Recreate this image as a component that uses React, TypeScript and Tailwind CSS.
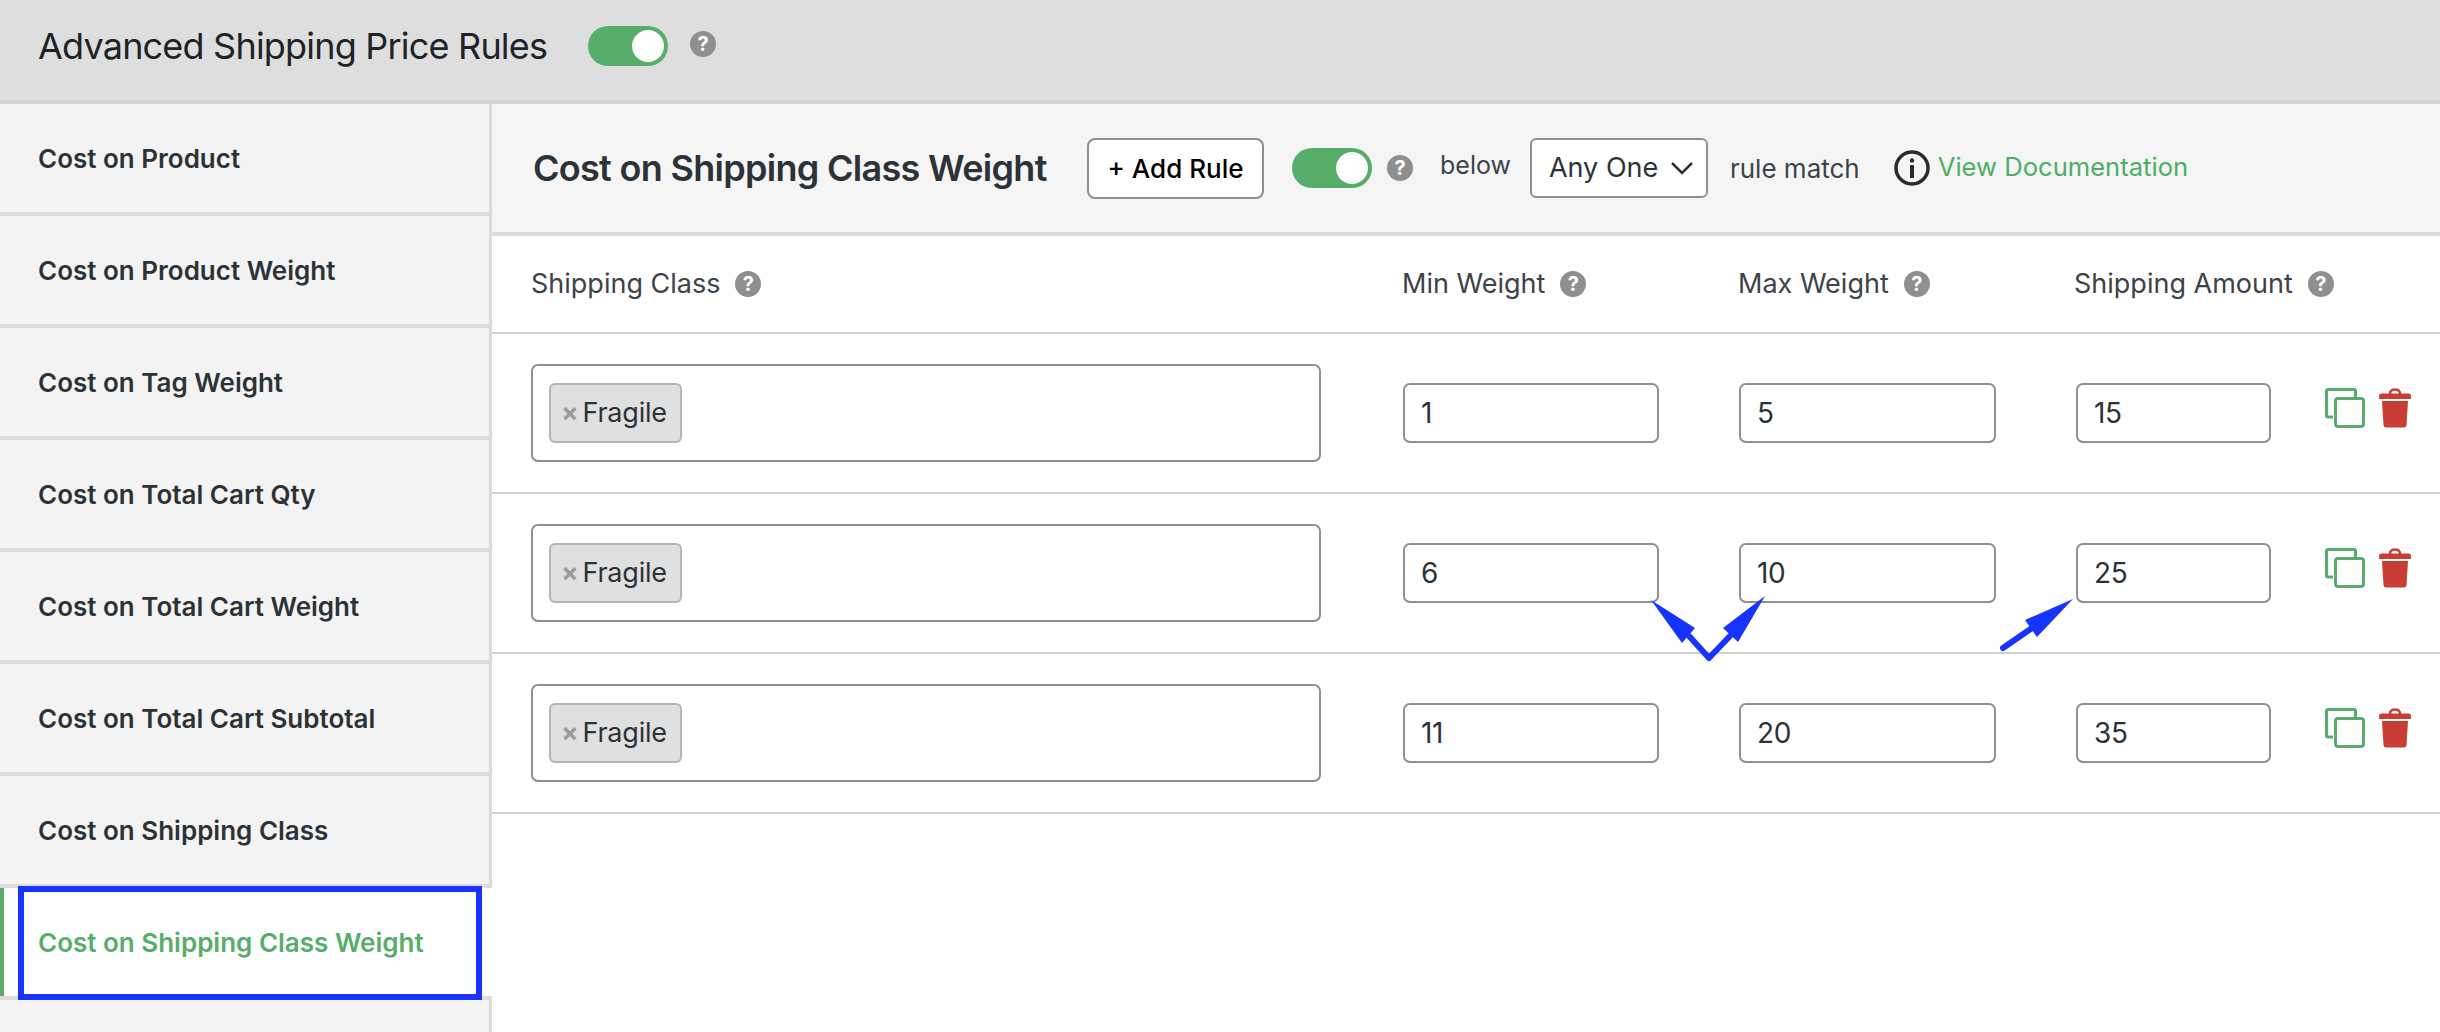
const items = [
  "Cost on Product",
  "Cost on Product Weight",
  "Cost on Tag Weight",
  "Cost on Total Cart Qty",
  "Cost on Total Cart Weight",
  "Cost on Total Cart Subtotal",
  "Cost on Shipping Class",
];
const rows = [
  ["1", "5", "15"],
  ["6", "10", "25"],
  ["11", "20", "35"],
];

function Help({ className = "" }: { className?: string }) {
  return (
    <span className={`flex h-[26px] w-[26px] shrink-0 items-center justify-center rounded-full bg-[#8f8f8f] text-[20px] font-bold leading-none text-white ${className}`}>
      ?
    </span>
  );
}

function Toggle() {
  return (
    <span className="flex h-[40px] w-[80px] shrink-0 items-center justify-end rounded-full bg-[#57ae6b] pr-[4px]">
      <span className="h-[32px] w-[32px] rounded-full bg-white" />
    </span>
  );
}

function CopyIcon() {
  return (
    <svg width="40" height="40" viewBox="0 0 40 40" fill="none" className="shrink-0">
      <path d="M8 29 H3 Q1.5 29 1.5 27.5 V3 Q1.5 1.5 3 1.5 H29 Q30.5 1.5 30.5 3 V9" stroke="#57ae6b" strokeWidth="3" />
      <rect x="10.5" y="10.5" width="28" height="28" rx="2.5" stroke="#57ae6b" strokeWidth="3" />
    </svg>
  );
}

function TrashIcon() {
  return (
    <svg width="32" height="40" viewBox="0 0 32 40" className="shrink-0">
      <path d="M11 6 Q11 1.5 16 1.5 Q21 1.5 21 6" fill="none" stroke="#c93c33" strokeWidth="2.5" />
      <path d="M2 5.5 H30 Q32 5.5 32 8 V11 H0 V8 Q0 5.5 2 5.5 Z" fill="#c93c33" />
      <path d="M3 13 H29 L27.5 37 Q27.3 39.5 25 39.5 H7 Q4.7 39.5 4.5 37 Z" fill="#c93c33" />
    </svg>
  );
}

function Row({ values }: { values: string[] }) {
  const field = "flex h-[60px] items-center rounded-[7px] border-2 border-[#8c8f94] bg-white pl-[16px] text-[28px] tracking-[-0.3px] text-[#2c3338]";
  return (
    <div className="flex h-[160px] shrink-0 items-center border-b-2 border-[#d0d0d0] pl-[39px]">
      <div className="flex h-[98px] w-[790px] shrink-0 items-center rounded-[7px] border-2 border-[#8c8f94] bg-white pl-[16px]">
        <span className="flex h-[60px] w-[133px] items-center rounded-[6px] border-2 border-[#b4b4b4] bg-[#e0e0e0] pl-[10px] text-[27px] tracking-[-0.2px] text-[#2c3338]">
          <span className="mr-[4px] text-[26px] font-bold leading-none text-[#9a9a9a]">×</span>
          Fragile
        </span>
      </div>
      <div className={`${field} ml-[82px] w-[256px] shrink-0`}>{values[0]}</div>
      <div className={`${field} ml-[80px] w-[257px] shrink-0`}>{values[1]}</div>
      <div className={`${field} ml-[80px] w-[195px] shrink-0`}>{values[2]}</div>
      <div className="ml-[54px] flex -translate-y-[5px] items-center gap-[14px]">
        <CopyIcon />
        <TrashIcon />
      </div>
    </div>
  );
}

export default function App() {
  return (
    <div className="relative flex h-[1032px] w-[2440px] flex-col overflow-hidden bg-white font-['Inter',sans-serif]">
      <header className="flex h-[104px] shrink-0 items-center border-b-[4px] border-[#d4d4d4] bg-[#dedede] pb-[8px] pl-[38px]">
        <h1 className="text-[36px] font-normal leading-none tracking-[-0.8px] text-[#1d2327]">Advanced Shipping Price Rules</h1>
        <span className="ml-[41px]"><Toggle /></span>
        <Help className="ml-[22px] -translate-y-[2px]" />
      </header>
      <div className="flex min-h-0 flex-1">
        <aside className="flex w-[492px] shrink-0 flex-col">
          {items.map((t) => (
            <div key={t} className="flex h-[112px] shrink-0 items-center border-r-[3px] border-b-[4px] border-r-[#dcdcdc] border-b-[#dcdcdc] bg-[#f3f3f3] pt-[1px] pl-[38px] text-[26px] font-semibold text-[#2c3338]">
              {t}
            </div>
          ))}
          <div className="relative flex h-[112px] shrink-0 items-center border-b-[4px] border-b-[#dcdcdc] bg-white pt-[1px] pl-[38px] text-[26px] font-semibold text-[#57ae6b]">
            <span className="absolute left-0 top-0 h-[108px] w-[4px] bg-[#57ae6b]" />
            <span className="absolute left-[18px] top-[-2px] h-[114px] w-[464px] border-[6px] border-[#1733ff]" />
            Cost on Shipping Class Weight
          </div>
          <div className="flex-1 border-r-[3px] border-r-[#dcdcdc] bg-[#f3f3f3]" />
        </aside>
        <main className="flex min-w-0 flex-1 flex-col">
          <div className="flex h-[132px] shrink-0 items-center border-b-[4px] border-[#dcdcdc] bg-[#f5f5f5] pl-[41px]">
            <h2 className="w-[554px] shrink-0 text-[36px] font-semibold leading-none tracking-[-0.7px] text-[#2c3338]">Cost on Shipping Class Weight</h2>
            <button className="flex h-[61px] w-[177px] shrink-0 items-center justify-center rounded-[8px] border-2 border-[#8c8f94] bg-white text-[26px] font-medium text-black">+ Add Rule</button>
            <span className="ml-[28px]"><Toggle /></span>
            <Help className="ml-[15px]" />
            <span className="ml-[27px] -translate-y-[2px] text-[25px] text-[#3c434a]">below</span>
            <div className="ml-[19px] flex h-[60px] w-[178px] shrink-0 items-center justify-between rounded-[6px] border-2 border-[#8c8f94] bg-white pl-[17px] pr-[12px] text-[27px] text-[#2c3338]">
              Any One
              <svg width="24" height="14" viewBox="0 0 24 14" fill="none"><path d="M2 2 L12 12 L22 2" stroke="#2c3338" strokeWidth="2.5" /></svg>
            </div>
            <span className="ml-[22px] text-[26px] text-[#3c434a]">rule match</span>
            <svg width="36" height="36" viewBox="0 0 36 36" fill="none" className="ml-[34px] shrink-0">
              <circle cx="18" cy="18" r="16" stroke="#2c2c2c" strokeWidth="3.5" />
              <circle cx="18" cy="10.5" r="2.2" fill="#2c2c2c" />
              <rect x="16" y="15" width="4" height="13" fill="#2c2c2c" />
            </svg>
            <a className="ml-[8px] -translate-y-[1px] text-[25.6px] text-[#4caf64]">View Documentation</a>
          </div>
          <div className="flex h-[98px] shrink-0 items-center border-b-2 border-[#d0d0d0] pl-[39px] text-[27px] text-[#3c434a]">
            <span className="flex w-[871px] shrink-0 items-center gap-[15px]">Shipping Class <Help /></span>
            <span className="flex w-[336px] shrink-0 items-center gap-[15px]">Min Weight <Help /></span>
            <span className="flex w-[336px] shrink-0 items-center gap-[15px]">Max Weight <Help /></span>
            <span className="flex shrink-0 items-center gap-[15px]">Shipping Amount <Help /></span>
          </div>
          <Row values={rows[0]} />
          <Row values={rows[1]} />
          <Row values={rows[2]} />
        </main>
      </div>
      <svg width="2440" height="1032" viewBox="0 0 2440 1032" className="pointer-events-none absolute left-0 top-0">
        <path d="M1709 658 L1689 636 M1709 658 L1730 636 M2003 648 L2032 628" stroke="#1733ff" strokeWidth="6" strokeLinecap="round" fill="none" />
        <polygon points="1651,600 1695,628 1682,643" fill="#1733ff" />
        <polygon points="1765,596 1738,642 1723,628" fill="#1733ff" />
        <polygon points="2073,599 2037,637 2025,620" fill="#1733ff" />
      </svg>
    </div>
  );
}
